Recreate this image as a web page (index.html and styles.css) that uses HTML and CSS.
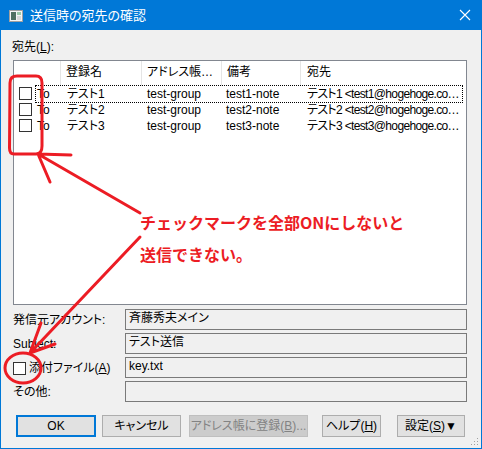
FILE: index.html
```html
<!DOCTYPE html>
<html lang="ja">
<head>
<meta charset="utf-8">
<title>送信時の宛先の確認</title>
<link rel="stylesheet" href="styles.css">
</head>
<body>
<div class="window">
  <div class="titlebar">
    <svg class="app-icon" width="14" height="12" viewBox="0 0 14 12">
      <rect x="0.5" y="0.5" width="13" height="11" fill="#f4f4f4" stroke="#a0a0a0"/>
      <rect x="2" y="2" width="5" height="8" fill="#4f6f60"/>
      <rect x="8" y="2" width="4" height="3" fill="#9bc9a8"/>
      <rect x="8" y="6" width="4" height="4" fill="#d8d8d8"/>
    </svg>
    <span class="title">送信時の宛先の確認</span>
    <svg class="close" width="12" height="12" viewBox="0 0 12 12">
      <path d="M1 1 L11 11 M11 1 L1 11" stroke="#fff" stroke-width="1.1" fill="none"/>
    </svg>
  </div>
  <div class="content">
    <div class="top-label">宛先<span class="lat">(<u>L</u>):</span></div>
    <div class="listbox">
      <div class="lv-header">
        <div class="hc c0"></div>
        <div class="hc c1">登録名</div>
        <div class="hc c2">アドレス帳…</div>
        <div class="hc c3">備考</div>
        <div class="hc c4">宛先</div>
      </div>
      <div class="lv-row">
        <span class="cb"></span>
        <div class="rowbody focus">
          <span class="rc r0">To</span>
          <span class="rc r1">テスト1</span>
          <span class="rc r2">test-group</span>
          <span class="rc r3">test1-note</span>
          <span class="rc r4">テスト1 &lt;test1@hogehoge.co…</span>
        </div>
      </div>
      <div class="lv-row">
        <span class="cb"></span>
        <div class="rowbody">
          <span class="rc r0">To</span>
          <span class="rc r1">テスト2</span>
          <span class="rc r2">test-group</span>
          <span class="rc r3">test2-note</span>
          <span class="rc r4">テスト2 &lt;test2@hogehoge.co…</span>
        </div>
      </div>
      <div class="lv-row">
        <span class="cb"></span>
        <div class="rowbody">
          <span class="rc r0">To</span>
          <span class="rc r1">テスト3</span>
          <span class="rc r2">test-group</span>
          <span class="rc r3">test3-note</span>
          <span class="rc r4">テスト3 &lt;test3@hogehoge.co…</span>
        </div>
      </div>
    </div>
    <div class="form">
      <div class="flabel">発信元アカウント:</div>
      <div class="field">斉藤秀夫メイン</div>
      <div class="flabel">Subject:</div>
      <div class="field">テスト送信</div>
      <div class="flabel check"><span class="cb cb-form"></span><span>添付ファイル<span class="lat">(<u>A</u>)</span></span></div>
      <div class="field">key.txt</div>
      <div class="flabel">その他:</div>
      <div class="field"></div>
    </div>
    <div class="buttons">
      <div class="btn b-ok default">OK</div>
      <div class="btn b-cancel">キャンセル</div>
      <div class="btn b-addr disabled">アドレス帳に登録<span class="lat">(<u>B</u>)...</span></div>
      <div class="btn b-help">ヘルプ<span class="lat">(<u>H</u>)</span></div>
      <div class="btn b-set">設定<span class="lat">(<u>S</u>)</span>▼</div>
    </div>
  </div>
  <svg class="grip" width="9" height="9" viewBox="0 0 9 9">
    <rect x="7" y="1" width="1" height="1" fill="#a0a0a0"/>
    <rect x="4" y="4" width="1" height="1" fill="#a0a0a0"/>
    <rect x="7" y="4" width="1" height="1" fill="#a0a0a0"/>
    <rect x="1" y="7" width="1" height="1" fill="#a0a0a0"/>
    <rect x="4" y="7" width="1" height="1" fill="#a0a0a0"/>
    <rect x="7" y="7" width="1" height="1" fill="#a0a0a0"/>
  </svg>
  <svg class="annot" width="482" height="449" viewBox="0 0 482 449">
    <g fill="none" stroke="#ec1c24" stroke-width="3" stroke-linecap="round" stroke-linejoin="round">
      <path d="M14 154 Q9.5 154 9.5 148 L10 83 Q10 76 17 76 L36 76 Q42 76 42 83 L42 146 Q42 154 36 154 Z"/>
      <path d="M140 213 L38 154 M38 154 L71 155 M38 154 L50 182"/>
      <path d="M140 237 L30 353 M30 353 L41 323 M30 353 L55 344"/>
      <ellipse cx="23" cy="368" rx="18" ry="15"/>
    </g>
  </svg>
  <div class="note">チェックマークを全部ONにしないと<br>送信できない。</div>
</div>
</body>
</html>
```

FILE: styles.css
```css
* { box-sizing: border-box; }
html, body {
  margin: 0;
  padding: 0;
  background: #f0f0f0;
}
body {
  font-family: "Liberation Sans", "Noto Sans CJK JP", sans-serif;
  font-size: 12px;
  color: #000;
  font-feature-settings: "palt";
}
.lat {
  font-family: "Liberation Sans", sans-serif;
  font-feature-settings: normal;
}
.window {
  position: relative;
  width: 482px;
  height: 449px;
  border: 1px solid #0078d7;
  border-top: 0;
  background: #f0f0f0;
  overflow: hidden;
}
.titlebar {
  height: 30px;
  margin: 0 -1px;
  background: #0078d7;
  display: flex;
  align-items: center;
  color: #fff;
}
.app-icon {
  margin-left: 9px;
  margin-top: 2px;
  flex: none;
}
.title {
  margin-left: 7px;
  font-family: "Noto Sans CJK JP", sans-serif;
  font-size: 13px;
  line-height: 16px;
}
.close {
  margin-left: auto;
  margin-right: 11px;
  flex: none;
}
.content {
  display: flex;
  flex-direction: column;
}
.top-label {
  margin: 9px 0 0 11px;
  line-height: 16px;
  height: 16px;
}
u { text-decoration: underline; text-underline-offset: 1px; }
.listbox {
  margin: 5px 0 0 12px;
  width: 454px;
  height: 245px;
  border: 1px solid #828790;
  background: #fff;
}
.lv-header {
  display: flex;
  height: 25px;
}
.hc {
  border-right: 1px solid #e5e5e5;
  line-height: 23px;
  padding-left: 5px;
  white-space: nowrap;
  overflow: hidden;
}
.c0 { width: 47px; }
.c1 { width: 81px; }
.c2 { width: 80px; }
.c3 { width: 79px; }
.c4 { flex: 1; border-right: 0; padding-left: 6px; }
.lv-row {
  display: flex;
  align-items: center;
  height: 16px;
}
.cb {
  display: inline-block;
  width: 13px;
  height: 13px;
  border: 1px solid #333;
  background: #fff;
  flex: none;
}
.lv-row .cb { margin-left: 5px; margin-top: -1px; }
.rowbody {
  display: flex;
  margin-left: 4px;
  width: 426px;
  height: 16px;
  line-height: 16px;
}
.focus { outline: 1px dotted #000; }
.rc {
  white-space: nowrap;
  overflow: hidden;
  flex: none;
}
.r0 { width: 24px; padding-left: 1px; }
.r1 { width: 81px; padding-left: 7px; }
.r2 { width: 80px; padding-left: 6px; }
.r3 { width: 79px; padding-left: 5px; }
.r4 { width: 162px; padding-left: 7px; letter-spacing: -0.65px; }
.form {
  margin: 4px 0 0 12px;
  display: grid;
  grid-template-columns: 112px 342px;
  row-gap: 3px;
}
.flabel {
  height: 21px;
  line-height: 20px;
  white-space: nowrap;
  display: flex;
  align-items: center;
}
.check { gap: 3px; }
.cb-form { margin-top: 1px; }
.field {
  height: 21px;
  border: 1px solid #7a7a7a;
  background: #f0f0f0;
  padding-left: 3px;
  line-height: 17px;
}
.buttons {
  display: flex;
  margin: 13px 0 0 15px;
  height: 22px;
}
.btn {
  height: 22px;
  background: #e1e1e1;
  border: 1px solid #adadad;
  display: flex;
  align-items: center;
  justify-content: center;
  line-height: 16px;
  white-space: nowrap;
  flex: none;
}
.default { border: 2px solid #0078d7; }
.disabled { background: #cccccc; border-color: #bfbfbf; color: #838383; }
.b-ok { width: 80px; }
.b-cancel { width: 79px; margin-left: 6px; }
.b-addr { width: 119px; margin-left: 8px; }
.b-help { width: 59px; margin-left: 14px; }
.b-set { width: 68px; margin-left: 16px; }
.grip {
  position: absolute;
  right: 2px;
  bottom: 2px;
}
.annot {
  position: absolute;
  left: -1px;
  top: 0;
  pointer-events: none;
}
.note {
  position: absolute;
  left: 139px;
  top: 206px;
  color: #ec1c24;
  font-family: "Noto Sans CJK JP", sans-serif;
  font-weight: bold;
  font-size: 16px;
  line-height: 32px;
  font-feature-settings: normal;
  white-space: nowrap;
}
```
